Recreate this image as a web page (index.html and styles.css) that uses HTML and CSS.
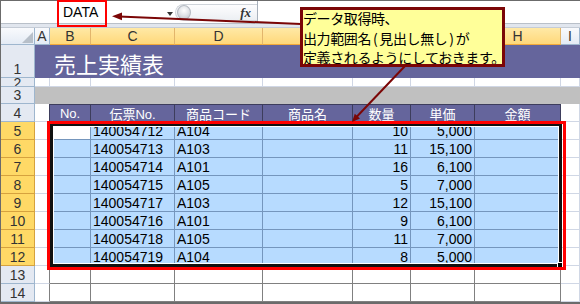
FILE: index.html
```html
<!DOCTYPE html>
<html lang="ja">
<head>
<meta charset="utf-8">
<title>売上実績表</title>
<link rel="stylesheet" href="styles.css">
</head>
<body>
<div class="app">
  <div class="fbar">
    <div class="namebox"><span class="nbtext">DATA</span><span class="dd"></span></div>
    <div class="fxarea"><span class="knob"></span><span class="fx">fx</span></div>
    <div class="finput"></div>
  </div>
  <div class="band"></div>
  <div class="sheet">
    <div class="cell corner"><span class="tri"></span></div>
    <div class="cell ch">A</div>
    <div class="cell ch sel">B</div>
    <div class="cell ch sel">C</div>
    <div class="cell ch sel">D</div>
    <div class="cell ch sel">E</div>
    <div class="cell ch sel">F</div>
    <div class="cell ch sel">G</div>
    <div class="cell ch sel">H</div>
    <div class="cell ch">I</div>

    <div class="cell rh">1</div>
    <div class="cell title">売上実績表</div>

    <div class="cell rh short">2</div>
    <div class="cell c"></div><div class="cell c"></div><div class="cell c"></div><div class="cell c"></div><div class="cell c"></div><div class="cell c"></div><div class="cell c"></div><div class="cell c"></div><div class="cell c"></div>

    <div class="cell rh">3</div>
    <div class="cell gray"></div>

    <div class="cell rh">4</div>
    <div class="cell c dk"></div>
    <div class="cell th">No.</div>
    <div class="cell th">伝票No.</div>
    <div class="cell th">商品コード</div>
    <div class="cell th">商品名</div>
    <div class="cell th">数量</div>
    <div class="cell th">単価</div>
    <div class="cell th">金額</div>
    <div class="cell c"></div>

    <div class="cell rh sel">5</div>
    <div class="cell c"></div>
    <div class="cell d w"></div>
    <div class="cell d">140054712</div>
    <div class="cell d">A104</div>
    <div class="cell d"></div>
    <div class="cell d r">10</div>
    <div class="cell d r">5,000</div>
    <div class="cell d"></div>
    <div class="cell c"></div>

    <div class="cell rh sel">6</div>
    <div class="cell c"></div>
    <div class="cell d"></div>
    <div class="cell d">140054713</div>
    <div class="cell d">A103</div>
    <div class="cell d"></div>
    <div class="cell d r">11</div>
    <div class="cell d r">15,100</div>
    <div class="cell d"></div>
    <div class="cell c"></div>

    <div class="cell rh sel">7</div>
    <div class="cell c"></div>
    <div class="cell d"></div>
    <div class="cell d">140054714</div>
    <div class="cell d">A101</div>
    <div class="cell d"></div>
    <div class="cell d r">16</div>
    <div class="cell d r">6,100</div>
    <div class="cell d"></div>
    <div class="cell c"></div>

    <div class="cell rh sel">8</div>
    <div class="cell c"></div>
    <div class="cell d"></div>
    <div class="cell d">140054715</div>
    <div class="cell d">A105</div>
    <div class="cell d"></div>
    <div class="cell d r">5</div>
    <div class="cell d r">7,000</div>
    <div class="cell d"></div>
    <div class="cell c"></div>

    <div class="cell rh sel">9</div>
    <div class="cell c"></div>
    <div class="cell d"></div>
    <div class="cell d">140054717</div>
    <div class="cell d">A103</div>
    <div class="cell d"></div>
    <div class="cell d r">12</div>
    <div class="cell d r">15,100</div>
    <div class="cell d"></div>
    <div class="cell c"></div>

    <div class="cell rh sel">10</div>
    <div class="cell c"></div>
    <div class="cell d"></div>
    <div class="cell d">140054716</div>
    <div class="cell d">A101</div>
    <div class="cell d"></div>
    <div class="cell d r">9</div>
    <div class="cell d r">6,100</div>
    <div class="cell d"></div>
    <div class="cell c"></div>

    <div class="cell rh sel">11</div>
    <div class="cell c"></div>
    <div class="cell d"></div>
    <div class="cell d">140054718</div>
    <div class="cell d">A105</div>
    <div class="cell d"></div>
    <div class="cell d r">11</div>
    <div class="cell d r">7,000</div>
    <div class="cell d"></div>
    <div class="cell c"></div>

    <div class="cell rh sel">12</div>
    <div class="cell c"></div>
    <div class="cell d"></div>
    <div class="cell d">140054719</div>
    <div class="cell d">A104</div>
    <div class="cell d"></div>
    <div class="cell d r">8</div>
    <div class="cell d r">5,000</div>
    <div class="cell d"></div>
    <div class="cell c"></div>

    <div class="cell rh">13</div>
    <div class="cell c gr"></div>
    <div class="cell b"></div><div class="cell b"></div><div class="cell b"></div><div class="cell b"></div><div class="cell b"></div><div class="cell b"></div><div class="cell b"></div>
    <div class="cell c"></div>

    <div class="cell rh">14</div>
    <div class="cell c gr"></div>
    <div class="cell b"></div><div class="cell b"></div><div class="cell b"></div><div class="cell b"></div><div class="cell b"></div><div class="cell b"></div><div class="cell b"></div>
    <div class="cell c"></div>

    <div class="selbox"><span class="handle"></span></div>
    <div class="redbox"></div>
  </div>

  <div class="redname"></div>
  <svg class="arrows" width="580" height="304" viewBox="0 0 580 304">
    <path d="M301 24 L119 16.6" stroke="#7b0606" stroke-width="2" fill="none"/>
    <polygon points="112,16.3 122,12.6 122,20.2" fill="#7b0606"/>
    <path d="M405 66 L356.5 117" stroke="#7b0606" stroke-width="2" fill="none"/>
    <polygon points="352,122 360,118.5 354.8,113.7" fill="#7b0606"/>
  </svg>
  <div class="callout">
    <div class="cl">データ取得時、</div>
    <div class="cl">出力範囲名<span class="par">(</span>見出し無し<span class="par">)</span>が</div>
    <div class="cl">定義されるようにしておきます。</div>
  </div>
</div>
</body>
</html>
```
FILE: styles.css
```css
* { box-sizing: border-box; margin: 0; padding: 0; }
html, body { width: 580px; height: 304px; overflow: hidden; background: #fff; }
body { font-family: "Liberation Sans", "Noto Sans CJK JP", sans-serif; color: #000; }

.app {
  position: relative;
  width: 580px;
  height: 304px;
  border-left: 1px solid #6b6b6b;
  border-top: 1px solid #6b6b6b;
  border-bottom: 2px solid #6b6b6b;
  display: flex;
  flex-direction: column;
  background: #fff;
}

/* formula bar */
.fbar { height: 23px; display: flex; border-bottom: 1px solid #b9c0c9; background: #fff; flex: none; }
.namebox { width: 174px; display: flex; align-items: center; }
.nbtext { padding-left: 62px; font-size: 14px; line-height: 22px; }
.dd {
  margin-left: auto; margin-right: 2px; margin-top: 3px;
  width: 0; height: 0;
  border-left: 3.5px solid transparent; border-right: 3.5px solid transparent;
  border-top: 4px solid #333;
}
.fxarea {
  width: 82px; margin: 3px 0 2px; display: flex; align-items: center;
  border: 1px solid #cfd4da; border-right: none; border-radius: 9px 0 0 9px;
  background: linear-gradient(#fdfdfe, #eceff3);
}
.knob {
  width: 14px; height: 15px; border-radius: 50%; margin-left: 1px;
  background: radial-gradient(circle at 50% 35%, #ffffff 0, #e3e6ea 45%, #b9bec6 100%);
  border: 1px solid #b5bac2;
}
.fx { margin-left: auto; margin-right: 6px; font: italic bold 13px "Liberation Serif", serif; color: #333; }
.finput { flex: 1; border-left: 1px solid #a7b0bb; background: #fff; }
.band { height: 4px; background: #e1e6ee; border-bottom: 1px solid #c5ccd6; flex: none; }

/* sheet grid */
.sheet {
  position: relative;
  display: grid;
  grid-template-columns: 34px 15px 41px 84px 88px 90px 58px 64px 86px 19px;
  grid-template-rows: 17px 33px 9px 17px 18px repeat(10, 18px);
  height: 274px;
  flex: none;
}
.cell {
  border-right: 1px solid #d0d7e5;
  border-bottom: 1px solid #d0d7e5;
  overflow: hidden;
  white-space: nowrap;
  display: flex;
  align-items: center;
  background: #fff;
}

.corner, .ch {
  background: linear-gradient(#f9fafd, #e4ebf5);
  border-color: #9eb6ce;
}
.ch { justify-content: center; font-size: 14px; color: #333; }
.ch.sel {
  background: linear-gradient(#ffe9a6, #ffd87a);
  border-right-color: #e2b56c;
  border-bottom-color: #f2a93a;
}
.corner { justify-content: flex-end; align-items: flex-end; }
.tri {
  width: 0; height: 0; margin: 0 1px 1px 0;
  border-left: 11px solid transparent;
  border-bottom: 11px solid #b7bfc9;
}

.rh {
  justify-content: center; align-items: flex-end;
  font-size: 14px; line-height: 16px; color: #333;
  background: #e4e9f2; border-color: #9eb6ce;
}
.rh.sel { background: #ffd966; border-color: #d6a23e; }
.rh.short { align-items: flex-start; line-height: 10px; }

.title {
  grid-column: 2 / -1;
  background: #65659c;
  border: none;
  color: #fff;
  font-family: "Noto Sans CJK JP", sans-serif;
  font-size: 22px;
  line-height: 30px;
  padding-left: 19px;
  align-items: flex-end;
}
.gray { grid-column: 2 / -1; background: #c0c0c0; border: none; }

.dk { border-right-color: #3d3d5c; }
.gr { border-right-color: #808080; }

.th {
  background: #65659c; color: #fff;
  font-size: 13px;
  justify-content: center;
  border-top: 1px solid #3d3d5c;
  border-right-color: #3d3d5c;
  border-bottom-color: #3d3d5c;
  padding-top: 1px;
}

.d {
  background: #b7dbff;
  border-color: #7596bd;
  font-size: 14px;
  padding: 1px 2px 0;
}
.d.w { background: #fff; }
.d.r { justify-content: flex-end; }
.b { border-color: #808080; }

/* selection + annotations (overlays anchored to the B5:H12 grid area) */
.selbox {
  position: absolute;
  grid-column: 3 / 10;
  grid-row: 6 / 14;
  top: 1px; left: 0; right: -1px; bottom: -1px;
  border: 3px solid #111;
  box-shadow: inset 0 0 0 1px #fff;
}
.handle {
  position: absolute; right: -4px; bottom: -4px;
  width: 6px; height: 6px; background: #000; border: 1px solid #fff;
}
.redbox {
  position: absolute;
  grid-column: 3 / 10;
  grid-row: 6 / 14;
  top: -1px; left: -3px; right: -5px; bottom: -4px;
  border: 3px solid #ff0000;
}
.redname {
  position: absolute; left: 56px; top: -1px;
  width: 50px; height: 27px;
  border: 2px solid #ff0000;
}
.arrows { position: absolute; left: -1px; top: -1px; pointer-events: none; }
.callout {
  position: absolute; left: 299px; top: 6px;
  width: 205px; height: 60px;
  background: #ffff99;
  border: 3px solid #7b0606;
  font-family: "Noto Sans CJK JP", sans-serif;
  font-size: 14px;
  letter-spacing: -0.4px;
  line-height: 19.5px;
  white-space: nowrap;
  overflow: hidden;
}
.cl { margin-top: -1px; }
.cl + .cl { margin-top: 0; }
.par { padding: 0 2px; }
```
